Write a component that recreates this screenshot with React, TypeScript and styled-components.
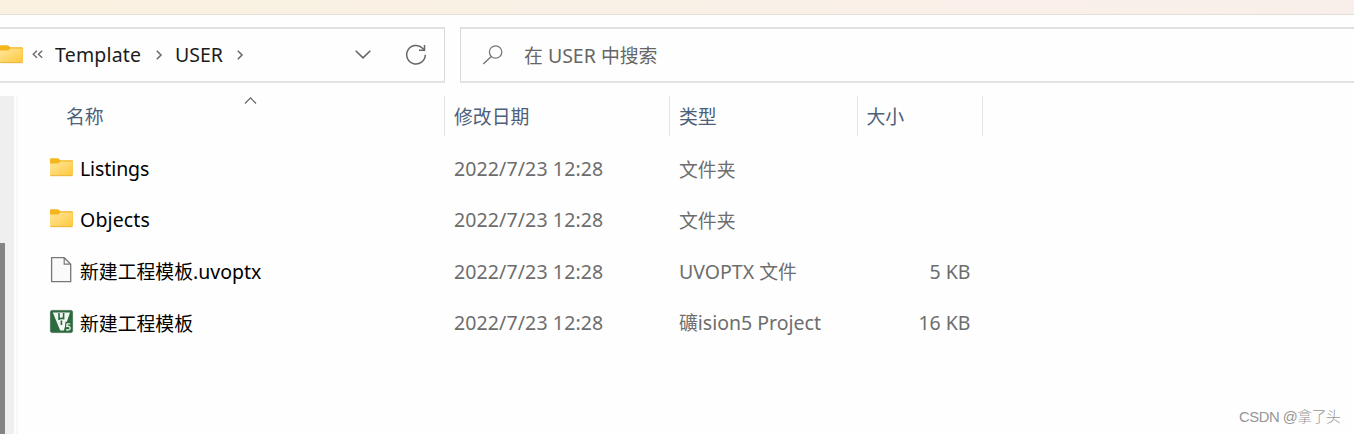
import React from 'react';
import styled, { createGlobalStyle } from 'styled-components';

const GlobalStyle = createGlobalStyle`
  * { box-sizing: border-box; }
  body { margin: 0; background: #fff; }
`;

const Window = styled.div`
  display: flex;
  flex-direction: column;
  width: 1354px;
  height: 434px;
  overflow: hidden;
  background: #fefefe;
  color: #6d6d6d;
  font-family: 'Noto Sans CJK SC', sans-serif;
  font-size: 18.85px;
  line-height: 28px;
  white-space: nowrap;
`;

const TitleStrip = styled.div`
  flex: none;
  height: 15px;
  border-bottom: 1px solid #e3dfd6;
  background: linear-gradient(90deg, #faf1e0 0%, #f9f1e3 25%, #f9f0e8 60%, #f9efea 100%);
`;

const Bars = styled.div`
  flex: none;
  display: flex;
  gap: 15px;
  height: 56px;
  margin-top: 12px;
`;

const AddressBar = styled.div`
  display: flex;
  align-items: center;
  width: 445px;
  padding-bottom: 1px;
  border-style: solid;
  border-width: 2px 1px 2px 0;
  border-color: #e0e0e0 #dadada #e3e3e3;
  color: #1b1b1b;
`;

const SearchBar = styled.div`
  display: flex;
  align-items: center;
  flex: 1;
  padding: 0 0 1px 21px;
  border-style: solid;
  border-width: 2px 0 2px 1px;
  border-color: #e0e0e0 #dadada #e3e3e3;
  color: #666;
`;

const Crumb = styled.span<{ $gap: number; $width: number }>`
  width: ${(p) => p.$width}px;
  margin-left: ${(p) => p.$gap}px;
`;

const Glyph = styled.svg<{ $ml?: number; $mt?: number }>`
  display: block;
  flex: none;
  fill: none;
  overflow: visible;
  margin-left: ${(p) => p.$ml ?? 0}px;
  margin-top: ${(p) => p.$mt ?? 0}px;
`;

const Hint = styled.span`
  margin: 2px 0 0 21px;
`;

const Body = styled.div`
  display: flex;
  flex: 1;
  margin-top: 13px;
`;

const ScrollTrack = styled.div`
  width: 14px;
  padding-top: 147px;
  background: #efefef;
`;

const ScrollThumb = styled.div`
  width: 5px;
  height: 100%;
  background: #848484;
`;

const PaneEdge = styled.div`
  width: 2px;
  margin-left: 2px;
  background: #f8f8f8;
`;

const Listing = styled.div`
  width: 965px;
`;

const columns = '427px 225px 187.5px 125px';

const HeaderRow = styled.div`
  display: grid;
  grid-template-columns: ${columns};
  height: 40px;
  color: #4c607a;
`;

const HeaderCell = styled.div<{ $pad?: number }>`
  position: relative;
  padding: 6px 0 0 ${(p) => p.$pad ?? 9}px;
  border-right: 1px solid #e4e4e4;
`;

const SortMark = styled.svg`
  position: absolute;
  left: 226px;
  top: 0;
  fill: none;
`;

const Rows = styled.div`
  margin-top: 7px;
`;

const Row = styled.div`
  display: grid;
  grid-template-columns: ${columns};
  align-items: center;
  height: 51.3px;
`;

const NameCell = styled.div`
  display: flex;
  align-items: center;
  padding-left: 32px;
  color: #000;
`;

const IconSlot = styled.span`
  width: 30px;
  height: 28px;
`;

const Cell = styled.div<{ $right?: boolean }>`
  padding: ${(p) => (p.$right ? '0 12px 0 0' : '0 0 0 9px')};
  text-align: ${(p) => (p.$right ? 'right' : 'left')};
`;

const Latin = styled.span<{ $track: number }>`
  font-family: 'Noto Sans', sans-serif;
  font-size: 19.5px;
  letter-spacing: ${(p) => p.$track}px;
`;

const Watermark = styled.div`
  position: absolute;
  left: 1239px;
  top: 407px;
  color: #969696;
  font-family: 'Liberation Sans', 'Noto Sans CJK SC', sans-serif;
  font-size: 14.8px;
  letter-spacing: -0.45px;
  font-weight: 300;
  line-height: 20px;
  white-space: nowrap;
`;

/* Latin runs use their own face beside the Chinese text. */
function Mixed({ text, track = 0 }: { text: string; track?: number }) {
  const runs = text.match(/[\x00-\x7f]+|[^\x00-\x7f]+/g) ?? [];
  return (
    <>
      {runs.map((run, i) =>
        run.charCodeAt(0) < 128 ? (
          <Latin key={i} $track={track}>{run}</Latin>
        ) : (
          <React.Fragment key={i}>{run}</React.Fragment>
        ),
      )}
    </>
  );
}

function FolderIcon({ ml = 0, mt = 0 }: { ml?: number; mt?: number }) {
  return (
    <Glyph width="23" height="19" viewBox="0 0 23 19" $ml={ml} $mt={mt}>
      <defs>
        <linearGradient id="folder" x1="0" y1="0" x2="1" y2="1">
          <stop offset="0" stopColor="#ffe69b" />
          <stop offset="1" stopColor="#ffc83c" />
        </linearGradient>
      </defs>
      <path d="M0 1.3Q0 .3 1 .3H7.5Q8.3.3 9 1L10.4 2.2H22Q23 2.2 23 3.2V16H0Z" fill="#f5b51d" />
      <path d="M0 5.4H8.2L10.5 3.6H22.8V17Q22.8 18 21.8 18H1Q0 18 0 17Z" fill="url(#folder)" />
      <path d="M.3 17.7H22.5" stroke="#e9b23a" strokeWidth=".9" />
    </Glyph>
  );
}

function FileIcon() {
  return (
    <Glyph width="22" height="26" viewBox="0 0 22 26">
      <path d="M1.6.7H14.2L20.7 7.2V24.6H1.6Z" fill="#fafafa" stroke="#777" strokeWidth="1.3" />
      <path d="M14.2.9V7.2H20.5" stroke="#777" strokeWidth="1.2" />
    </Glyph>
  );
}

function ProjectIcon() {
  return (
    <Glyph width="23" height="23" viewBox="0 0 23 23" $mt={1}>
      <rect x=".4" y=".4" width="22.2" height="22.2" rx="1.8" fill="#2b6b3d" stroke="#48745a" strokeWidth=".8" />
      <path d="M2.8 2.4H20L13.8 20.4H10.2Z" fill="#f1f6f2" />
      <path d="M9 3V10M9 7.8Q11.4 9.5 13.4 7.5M13.6 3V9.5M11.4 10.5V15" stroke="#2b6b3d" strokeWidth="1.6" />
      <path d="M20.3 13.5H17L16.7 16.5Q20.2 15.9 20.2 18.2Q20 20.6 16.2 19.9" stroke="#2b6b3d" strokeWidth="3.4" />
      <path d="M20.3 13.9H17.1L16.8 16.4Q20.2 15.9 20.2 18.2Q20 20.4 16.2 19.8" stroke="#e5efe7" strokeWidth="1.4" />
    </Glyph>
  );
}

type Entry = {
  kind: 'folder' | 'file' | 'project';
  name: string;
  track: number;
  type: string;
  size?: string;
};

const entries: Entry[] = [
  { kind: 'folder', name: 'Listings', track: -0.1, type: '文件夹' },
  { kind: 'folder', name: 'Objects', track: 0.15, type: '文件夹' },
  { kind: 'file', name: '新建工程模板.uvoptx', track: 0, type: 'UVOPTX 文件', size: '5 KB' },
  { kind: 'project', name: '新建工程模板', track: 0, type: '礦ision5 Project', size: '16 KB' },
];

export default function App() {
  return (
    <Window>
      <GlobalStyle />
      <TitleStrip />
      <Bars>
        <AddressBar>
          <FolderIcon />
          <Glyph width="12" height="9" viewBox="0 0 12 9" $ml={9}>
            <path d="M5 .8L1.2 4.3L5 7.8M10.2.8L6.4 4.3L10.2 7.8" stroke="#666" strokeWidth="1.3" />
          </Glyph>
          <Crumb $gap={11} $width={86}><Mixed text="Template" track={0.2} /></Crumb>
          <Glyph width="6" height="10" viewBox="0 0 6 10" $ml={15} $mt={1}>
            <path d="M.8.8L5 5L.8 9.2" stroke="#666" strokeWidth="1.5" />
          </Glyph>
          <Crumb $gap={13} $width={48}><Mixed text="USER" /></Crumb>
          <Glyph width="6" height="10" viewBox="0 0 6 10" $ml={14} $mt={1}>
            <path d="M.8.8L5 5L.8 9.2" stroke="#666" strokeWidth="1.5" />
          </Glyph>
          <Glyph width="16" height="9" viewBox="0 0 16 9" $ml={112}>
            <path d="M.7.7L8 7.8L15.3.7" stroke="#666" strokeWidth="1.6" />
          </Glyph>
          <Glyph width="22" height="22" viewBox="0 0 22 22" $ml={34}>
            <path d="M20.3 10.8A9.3 9.3 0 1 1 17.6 4.2L19.4 6" stroke="#666" strokeWidth="1.5" />
            <path d="M19.5 1V6.3H14" stroke="#666" strokeWidth="1.5" />
          </Glyph>
        </AddressBar>
        <SearchBar>
          <Glyph width="21" height="20" viewBox="0 0 21 20">
            <circle cx="13.6" cy="7" r="6.2" stroke="#777" strokeWidth="1.3" />
            <path d="M9.2 11.4L1.3 19" stroke="#777" strokeWidth="1.4" />
          </Glyph>
          <Hint><Mixed text="在 USER 中搜索" /></Hint>
        </SearchBar>
      </Bars>
      <Body>
        <ScrollTrack><ScrollThumb /></ScrollTrack>
        <PaneEdge />
        <Listing>
          <HeaderRow>
            <HeaderCell $pad={48}>
              名称
              <SortMark width="13" height="9" viewBox="0 0 13 9">
                <path d="M1 7.5L6.5 1.8L12 7.5" stroke="#666" strokeWidth="1.2" />
              </SortMark>
            </HeaderCell>
            <HeaderCell>修改日期</HeaderCell>
            <HeaderCell>类型</HeaderCell>
            <HeaderCell>大小</HeaderCell>
          </HeaderRow>
          <Rows>
            {entries.map((e) => (
              <Row key={e.name}>
                <NameCell>
                  <IconSlot>
                    {e.kind === 'folder' && <FolderIcon mt={3} />}
                    {e.kind === 'file' && <FileIcon />}
                    {e.kind === 'project' && <ProjectIcon />}
                  </IconSlot>
                  <span><Mixed text={e.name} track={e.track} /></span>
                </NameCell>
                <Cell><Mixed text="2022/7/23 12:28" track={0.12} /></Cell>
                <Cell><Mixed text={e.type} /></Cell>
                <Cell $right>{e.size && <Mixed text={e.size} />}</Cell>
              </Row>
            ))}
          </Rows>
        </Listing>
      </Body>
      <Watermark>CSDN @拿了头</Watermark>
    </Window>
  );
}
